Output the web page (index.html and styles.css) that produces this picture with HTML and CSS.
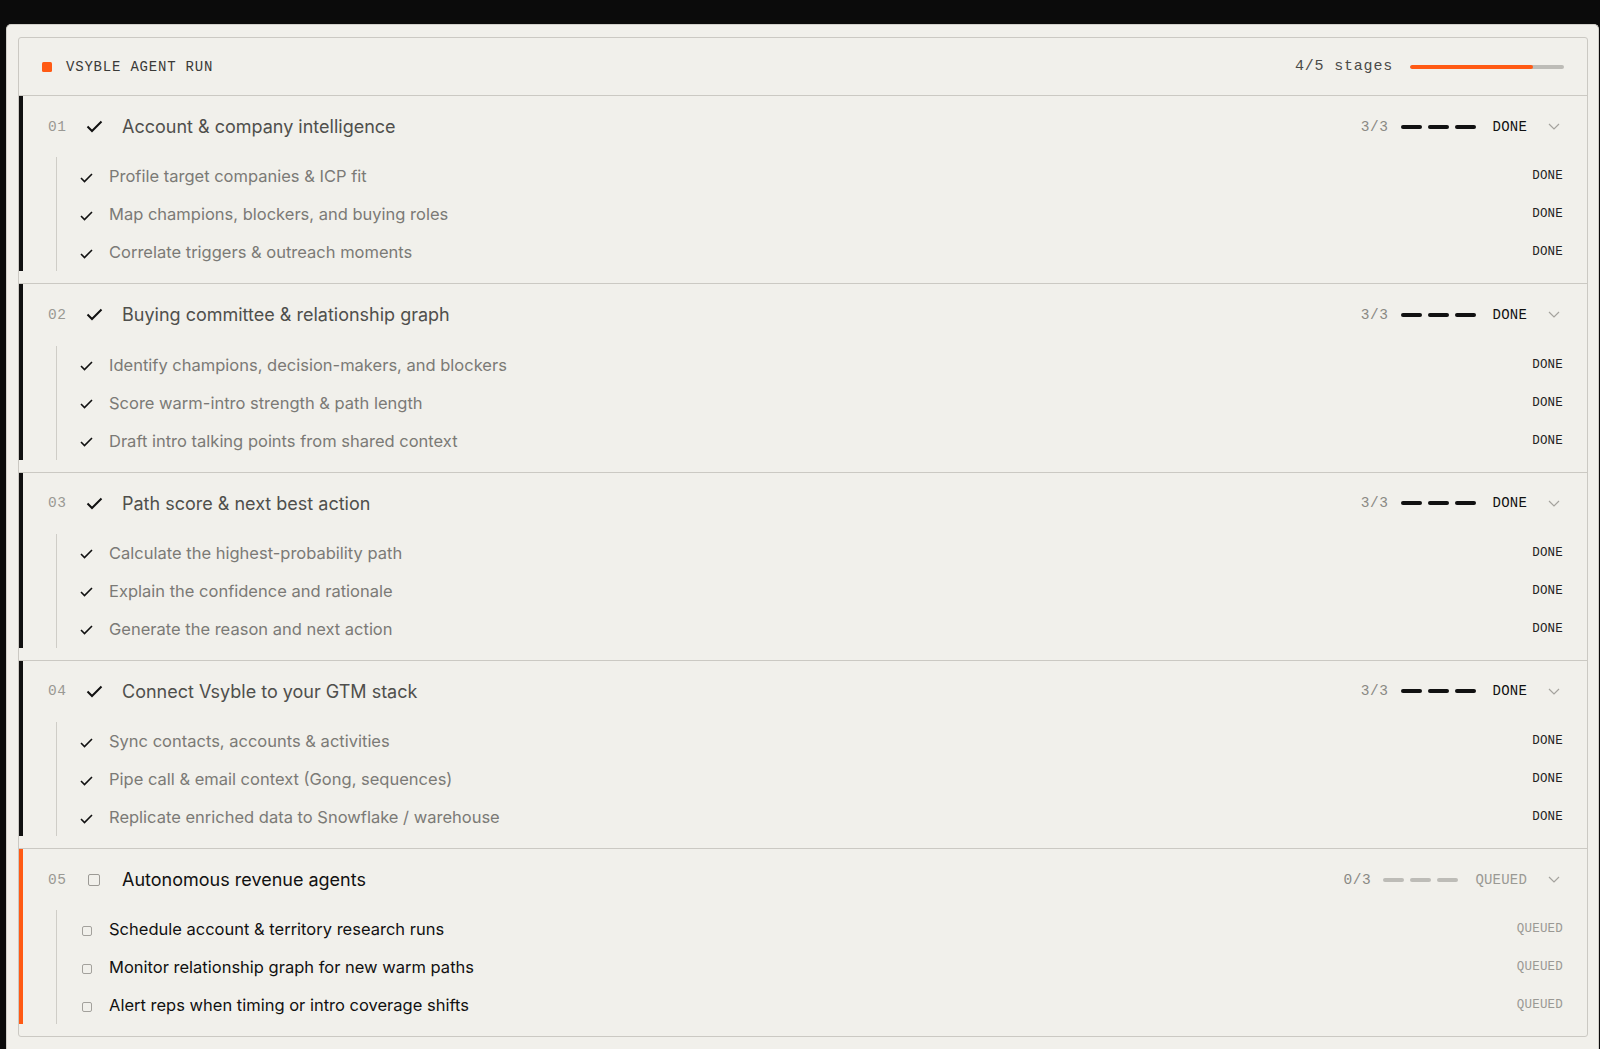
FILE: index.html
```html
<!DOCTYPE html>
<html>
<head>
<meta charset="utf-8">
<link rel="stylesheet" href="styles.css">
</head>
<body>
<div class="frame">
  <div class="card">
    <div class="card-head">
      <div class="brand"><span class="dot"></span><span class="brand-text">VSYBLE AGENT RUN</span></div>
      <div class="overall">
        <span class="overall-text">4/5 stages</span>
        <div class="bar"><div class="bar-fill" style="width:80%"></div></div>
      </div>
    </div>

    <div class="stage done">
      <div class="stage-inner">
        <div class="stage-row">
          <span class="num">01</span>
          <span class="ico"><svg width="17" height="13" viewBox="0 0 17 13"><path d="M1.5 6.5l4.5 4.5 9.5-9.5" fill="none" stroke="#111" stroke-width="2"/></svg></span>
          <span class="title">Account &amp; company intelligence</span>
          <span class="meta">
            <span class="count">3/3</span>
            <span class="dashes"><i></i><i></i><i></i></span>
            <span class="state">DONE</span>
            <svg class="chev" width="12" height="7" viewBox="0 0 12 7"><path d="M1 1l5 5 5-5" fill="none" stroke="#a5a39e" stroke-width="1.2"/></svg>
          </span>
        </div>
        <div class="subs">
          <div class="sub"><span class="sico"><svg width="13" height="10" viewBox="0 0 13 10"><path d="M1 5l3.5 3.5 7.5-7.5" fill="none" stroke="#111" stroke-width="1.6"/></svg></span><span class="stext">Profile target companies &amp; ICP fit</span><span class="sstate">DONE</span></div>
          <div class="sub"><span class="sico"><svg width="13" height="10" viewBox="0 0 13 10"><path d="M1 5l3.5 3.5 7.5-7.5" fill="none" stroke="#111" stroke-width="1.6"/></svg></span><span class="stext">Map champions, blockers, and buying roles</span><span class="sstate">DONE</span></div>
          <div class="sub"><span class="sico"><svg width="13" height="10" viewBox="0 0 13 10"><path d="M1 5l3.5 3.5 7.5-7.5" fill="none" stroke="#111" stroke-width="1.6"/></svg></span><span class="stext">Correlate triggers &amp; outreach moments</span><span class="sstate">DONE</span></div>
        </div>
      </div>
    </div>

    <div class="stage done">
      <div class="stage-inner">
        <div class="stage-row">
          <span class="num">02</span>
          <span class="ico"><svg width="17" height="13" viewBox="0 0 17 13"><path d="M1.5 6.5l4.5 4.5 9.5-9.5" fill="none" stroke="#111" stroke-width="2"/></svg></span>
          <span class="title">Buying committee &amp; relationship graph</span>
          <span class="meta">
            <span class="count">3/3</span>
            <span class="dashes"><i></i><i></i><i></i></span>
            <span class="state">DONE</span>
            <svg class="chev" width="12" height="7" viewBox="0 0 12 7"><path d="M1 1l5 5 5-5" fill="none" stroke="#a5a39e" stroke-width="1.2"/></svg>
          </span>
        </div>
        <div class="subs">
          <div class="sub"><span class="sico"><svg width="13" height="10" viewBox="0 0 13 10"><path d="M1 5l3.5 3.5 7.5-7.5" fill="none" stroke="#111" stroke-width="1.6"/></svg></span><span class="stext">Identify champions, decision-makers, and blockers</span><span class="sstate">DONE</span></div>
          <div class="sub"><span class="sico"><svg width="13" height="10" viewBox="0 0 13 10"><path d="M1 5l3.5 3.5 7.5-7.5" fill="none" stroke="#111" stroke-width="1.6"/></svg></span><span class="stext">Score warm-intro strength &amp; path length</span><span class="sstate">DONE</span></div>
          <div class="sub"><span class="sico"><svg width="13" height="10" viewBox="0 0 13 10"><path d="M1 5l3.5 3.5 7.5-7.5" fill="none" stroke="#111" stroke-width="1.6"/></svg></span><span class="stext">Draft intro talking points from shared context</span><span class="sstate">DONE</span></div>
        </div>
      </div>
    </div>

    <div class="stage done">
      <div class="stage-inner">
        <div class="stage-row">
          <span class="num">03</span>
          <span class="ico"><svg width="17" height="13" viewBox="0 0 17 13"><path d="M1.5 6.5l4.5 4.5 9.5-9.5" fill="none" stroke="#111" stroke-width="2"/></svg></span>
          <span class="title">Path score &amp; next best action</span>
          <span class="meta">
            <span class="count">3/3</span>
            <span class="dashes"><i></i><i></i><i></i></span>
            <span class="state">DONE</span>
            <svg class="chev" width="12" height="7" viewBox="0 0 12 7"><path d="M1 1l5 5 5-5" fill="none" stroke="#a5a39e" stroke-width="1.2"/></svg>
          </span>
        </div>
        <div class="subs">
          <div class="sub"><span class="sico"><svg width="13" height="10" viewBox="0 0 13 10"><path d="M1 5l3.5 3.5 7.5-7.5" fill="none" stroke="#111" stroke-width="1.6"/></svg></span><span class="stext">Calculate the highest-probability path</span><span class="sstate">DONE</span></div>
          <div class="sub"><span class="sico"><svg width="13" height="10" viewBox="0 0 13 10"><path d="M1 5l3.5 3.5 7.5-7.5" fill="none" stroke="#111" stroke-width="1.6"/></svg></span><span class="stext">Explain the confidence and rationale</span><span class="sstate">DONE</span></div>
          <div class="sub"><span class="sico"><svg width="13" height="10" viewBox="0 0 13 10"><path d="M1 5l3.5 3.5 7.5-7.5" fill="none" stroke="#111" stroke-width="1.6"/></svg></span><span class="stext">Generate the reason and next action</span><span class="sstate">DONE</span></div>
        </div>
      </div>
    </div>

    <div class="stage done">
      <div class="stage-inner">
        <div class="stage-row">
          <span class="num">04</span>
          <span class="ico"><svg width="17" height="13" viewBox="0 0 17 13"><path d="M1.5 6.5l4.5 4.5 9.5-9.5" fill="none" stroke="#111" stroke-width="2"/></svg></span>
          <span class="title">Connect Vsyble to your GTM stack</span>
          <span class="meta">
            <span class="count">3/3</span>
            <span class="dashes"><i></i><i></i><i></i></span>
            <span class="state">DONE</span>
            <svg class="chev" width="12" height="7" viewBox="0 0 12 7"><path d="M1 1l5 5 5-5" fill="none" stroke="#a5a39e" stroke-width="1.2"/></svg>
          </span>
        </div>
        <div class="subs">
          <div class="sub"><span class="sico"><svg width="13" height="10" viewBox="0 0 13 10"><path d="M1 5l3.5 3.5 7.5-7.5" fill="none" stroke="#111" stroke-width="1.6"/></svg></span><span class="stext">Sync contacts, accounts &amp; activities</span><span class="sstate">DONE</span></div>
          <div class="sub"><span class="sico"><svg width="13" height="10" viewBox="0 0 13 10"><path d="M1 5l3.5 3.5 7.5-7.5" fill="none" stroke="#111" stroke-width="1.6"/></svg></span><span class="stext">Pipe call &amp; email context (Gong, sequences)</span><span class="sstate">DONE</span></div>
          <div class="sub"><span class="sico"><svg width="13" height="10" viewBox="0 0 13 10"><path d="M1 5l3.5 3.5 7.5-7.5" fill="none" stroke="#111" stroke-width="1.6"/></svg></span><span class="stext">Replicate enriched data to Snowflake / warehouse</span><span class="sstate">DONE</span></div>
        </div>
      </div>
    </div>

    <div class="stage queued">
      <div class="stage-inner">
        <div class="stage-row">
          <span class="num">05</span>
          <span class="ico"><span class="box"></span></span>
          <span class="title">Autonomous revenue agents</span>
          <span class="meta">
            <span class="count">0/3</span>
            <span class="dashes"><i></i><i></i><i></i></span>
            <span class="state">QUEUED</span>
            <svg class="chev" width="12" height="7" viewBox="0 0 12 7"><path d="M1 1l5 5 5-5" fill="none" stroke="#a5a39e" stroke-width="1.2"/></svg>
          </span>
        </div>
        <div class="subs">
          <div class="sub"><span class="sico"><span class="sbox"></span></span><span class="stext">Schedule account &amp; territory research runs</span><span class="sstate">QUEUED</span></div>
          <div class="sub"><span class="sico"><span class="sbox"></span></span><span class="stext">Monitor relationship graph for new warm paths</span><span class="sstate">QUEUED</span></div>
          <div class="sub"><span class="sico"><span class="sbox"></span></span><span class="stext">Alert reps when timing or intro coverage shifts</span><span class="sstate">QUEUED</span></div>
        </div>
      </div>
    </div>
  </div>
</div>
</body>
</html>
```

FILE: styles.css
```css
* { box-sizing: border-box; }
html, body { margin: 0; padding: 0; }
body {
  background: #0b0b0b;
  height: 1049px;
  overflow: hidden;
  font-family: Inter, "Noto Sans", sans-serif;
}
.frame {
  margin: 24px 0 0 6px;
  width: 1593px;
  height: 1025px;
  background: #f1f0eb;
  border: 1px solid #d2d0ca;
  border-bottom: none;
  border-radius: 5px 5px 0 0;
  padding: 12px 10px 0 11px;
}
.card {
  width: 1570px;
  border: 1px solid #cbc9c3;
  border-radius: 3px;
  background: #f1f0eb;
}
.card-head {
  height: 58px;
  border-bottom: 1px solid #cbc9c3;
  display: flex;
  align-items: center;
  justify-content: space-between;
  padding: 0 23px 0 23px;
}
.brand { display: flex; align-items: center; }
.dot {
  width: 10px; height: 10px;
  background: #ff5a14;
  border-radius: 1.5px;
  margin-right: 14px;
}
.brand-text, .overall-text, .num, .count, .state, .sstate {
  font-family: "Liberation Mono", "DejaVu Sans Mono", monospace;
}
.brand-text {
  font-size: 14px;
  letter-spacing: 0.8px;
  color: #3a3a38;
}
.overall { display: flex; align-items: center; }
.overall-text {
  font-size: 15px;
  letter-spacing: 0.8px;
  color: #4a4a48;
  margin-right: 17px;
}
.bar {
  width: 154px; height: 4px;
  background: #bdbcb7;
  border-radius: 2px;
  overflow: hidden;
}
.bar-fill { height: 100%; background: #ff5a14; border-radius: 2px; }

.stage { border-bottom: 1px solid #cbc9c3; }
.stage:last-child { border-bottom: none; }
.stage-inner {
  border-left: 4px solid #111;
  margin-bottom: 12px;
}
.queued .stage-inner { border-left-color: #ff5a14; }
.stage-row {
  height: 61.25px;
  display: flex;
  align-items: center;
  padding: 0 27px 0 25px;
}
.num {
  width: 38px;
  font-size: 14.5px;
  color: #9a9994;
  letter-spacing: 0.5px;
}
.ico {
  width: 36px;
  display: flex;
  align-items: center;
}
.box {
  width: 12px; height: 12px;
  border: 1.4px solid #9c9a95;
  border-radius: 2px;
  margin-left: 2px;
}
.title {
  font-size: 18px;
  color: #4f4f4c;
  flex: 1;
}
.queued .title { color: #111; }
.meta { display: flex; align-items: center; }
.count {
  font-size: 14.5px;
  letter-spacing: 0.6px;
  color: #8a8984;
  margin-right: 12px;
}
.dashes { display: flex; gap: 6px; margin-right: 17px; }
.dashes i {
  display: block;
  width: 21px; height: 4px;
  border-radius: 2px;
  background: #111;
}
.queued .dashes i { background: #bdbcb7; }
.state {
  font-size: 14px;
  letter-spacing: 0.2px;
  color: #111;
  margin-right: 21px;
}
.queued .state { color: #9a9994; }
.chev { display: block; }

.subs {
  margin-left: 33px;
  border-left: 1px solid #cfcdc7;
}
.sub {
  height: 38px;
  display: flex;
  align-items: center;
  padding: 0 24px 0 23px;
}
.sico {
  width: 29px;
  display: flex;
  align-items: center;
  padding-top: 3px;
}
.sbox {
  width: 10px; height: 10px;
  border: 1.2px solid #a3a19c;
  border-radius: 2px;
  margin-left: 2px;
}
.stext {
  font-size: 16.5px;
  color: #7b7a76;
  flex: 1;
}
.queued .stext { color: #111; }
.sstate {
  font-size: 12.5px;
  letter-spacing: 0.2px;
  color: #222;
}
.queued .sstate { color: #9a9994; }
```
